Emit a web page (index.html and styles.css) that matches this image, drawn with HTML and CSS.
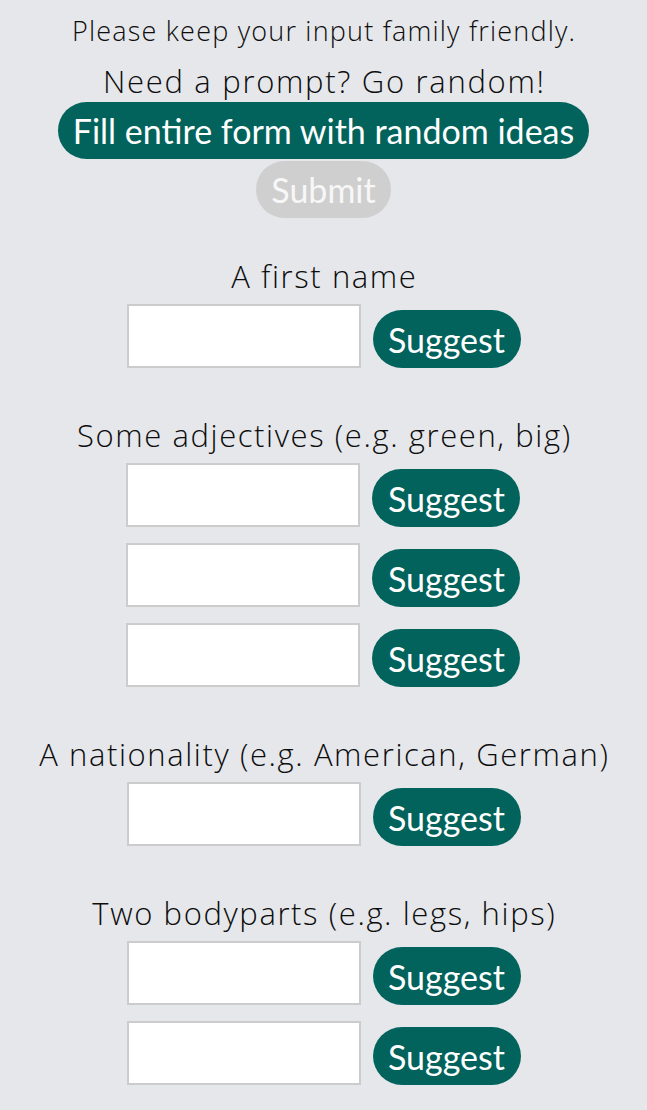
FILE: index.html
```html
<!DOCTYPE html>
<html lang="en">
<head>
<meta charset="utf-8">
<title>Form</title>
<link rel="stylesheet" href="styles.css">
</head>
<body>
<main class="page">
  <p class="notice">Please keep your input family friendly.</p>
  <p class="prompt">Need a prompt? Go random!</p>
  <button class="btn btn-fill" type="button">Fill entire form with random ideas</button>
  <button class="btn btn-submit" type="button" disabled>Submit</button>

  <section class="field field-first">
    <h2 class="label">A first name</h2>
    <div class="rows">
      <div class="row"><input class="input" type="text"><button class="btn btn-suggest" type="button">Suggest</button></div>
    </div>
  </section>

  <section class="field">
    <h2 class="label">Some adjectives (e.g. green, big)</h2>
    <div class="rows">
      <div class="row"><input class="input" type="text"><button class="btn btn-suggest" type="button">Suggest</button></div>
      <div class="row"><input class="input" type="text"><button class="btn btn-suggest" type="button">Suggest</button></div>
      <div class="row"><input class="input" type="text"><button class="btn btn-suggest" type="button">Suggest</button></div>
    </div>
  </section>

  <section class="field">
    <h2 class="label">A nationality (e.g. American, German)</h2>
    <div class="rows">
      <div class="row"><input class="input" type="text"><button class="btn btn-suggest" type="button">Suggest</button></div>
    </div>
  </section>

  <section class="field">
    <h2 class="label">Two bodyparts (e.g. legs, hips)</h2>
    <div class="rows">
      <div class="row"><input class="input" type="text"><button class="btn btn-suggest" type="button">Suggest</button></div>
      <div class="row"><input class="input" type="text"><button class="btn btn-suggest" type="button">Suggest</button></div>
    </div>
  </section>
</main>
</body>
</html>
```

FILE: styles.css
```css
html, body {
  margin: 0;
  padding: 0;
  background: #e5e7eb;
}

body {
  font-family: "Open Sans", "Lato", sans-serif;
  color: #0d0d0d;
}

.page {
  display: flex;
  flex-direction: column;
  align-items: center;
  text-align: center;
}

.notice {
  margin: 12px 0 0;
  padding-left: 1.2px;
  font-size: 27px;
  font-weight: 300;
  line-height: 38px;
  letter-spacing: 1.2px;
  white-space: nowrap;
}

.prompt {
  margin: 10px 0 0;
  padding-left: 1.7px;
  font-size: 31px;
  font-weight: 300;
  line-height: 42px;
  letter-spacing: 1.7px;
  white-space: nowrap;
}

.btn {
  border: none;
  border-radius: 999px;
  font-family: "Lato", "Noto Sans", sans-serif;
  color: #ffffff;
  cursor: pointer;
  padding: 0 15px;
  white-space: nowrap;
}

.btn-fill {
  height: 57px;
  font-size: 34px;
  background: #02635c;
}

.btn-submit {
  margin-top: 2px;
  height: 57px;
  font-size: 34px;
  background: #cfcfcf;
  color: #f7f7f7;
}

.field {
  display: flex;
  flex-direction: column;
  align-items: center;
  gap: 7px;
  margin-top: 46px;
}

.field-first {
  margin-top: 37px;
}

.label {
  margin: 0;
  padding-left: 1.6px;
  font-size: 31px;
  font-weight: 300;
  line-height: 42px;
  letter-spacing: 1.6px;
  white-space: nowrap;
}

.rows {
  display: flex;
  flex-direction: column;
  gap: 16px;
}

.row {
  display: flex;
  align-items: flex-end;
  gap: 12px;
}

.input {
  box-sizing: border-box;
  width: 234px;
  height: 64px;
  margin: 0;
  border: 2px solid #cccccc;
  background: #ffffff;
  border-radius: 0;
}

.btn-suggest {
  height: 58px;
  width: 148px;
  font-size: 34px;
  background: #02635c;
}
```
